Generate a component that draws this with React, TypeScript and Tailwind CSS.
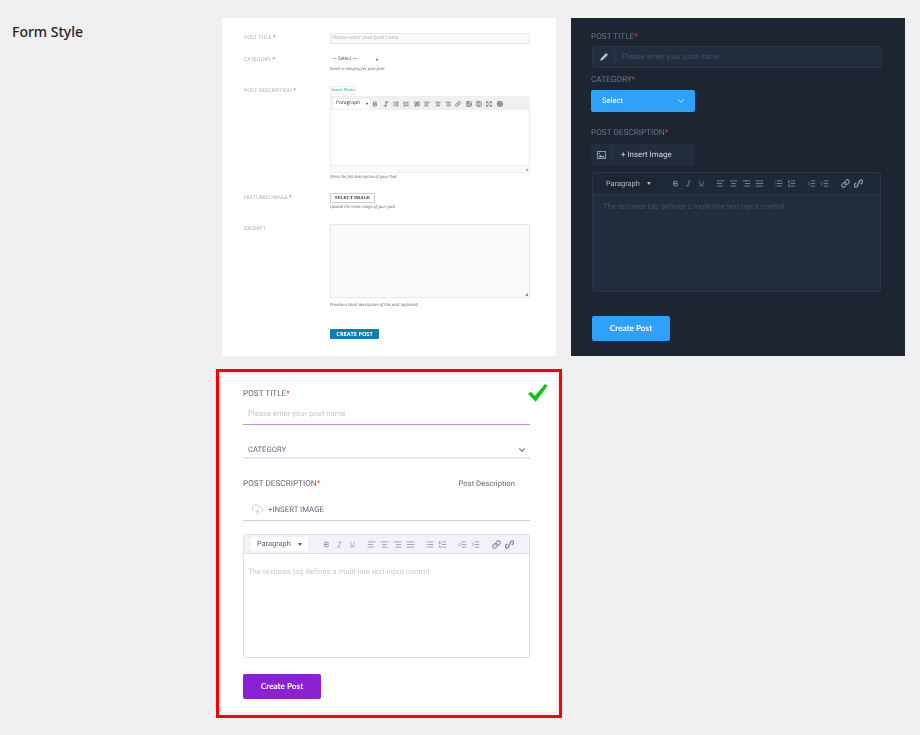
import React from 'react';
import {
  AlignCenter,
  AlignJustify,
  AlignLeft,
  AlignRight,
  Bold,
  ChevronDown,
  CloudUpload,
  Columns2,
  Expand,
  Image,
  IndentDecrease,
  IndentIncrease,
  Italic,
  Link,
  List,
  ListOrdered,
  Pencil,
  Quote,
  Table,
  Underline,
} from 'lucide-react';

const roboto = 'font-["Roboto",sans-serif]';

function Req({ className }: { className: string }) {
  return <span className={className}>*</span>;
}

function UnlinkIcon() {
  return (
    <svg width="9" height="9" viewBox="0 0 12 12" fill="none" stroke="currentColor" strokeWidth="1.8" strokeLinecap="round">
      <path d="M6.5 3.5 8 2a2.1 2.1 0 0 1 3 3L9.5 6.5" />
      <path d="M5.5 8.5 4 10a2.1 2.1 0 0 1-3-3l1.5-1.5" />
      <path d="M7.5 4.5l-3 3" />
    </svg>
  );
}

function PhotoIcon() {
  return (
    <svg width="9" height="8" viewBox="0 0 12 10">
      <rect x="0.5" y="0.5" width="11" height="9" fill="none" stroke="currentColor" />
      <path d="M2 8l2.5-3.5L6.5 7l2-1.5L10 8z" fill="currentColor" />
      <circle cx="3.2" cy="3" r="0.9" fill="currentColor" />
    </svg>
  );
}

function ToolIcon({ icon: Icon, bold, size = 9 }: { icon: React.ElementType; bold?: boolean; size?: number }) {
  return (
    <span className="flex w-[13px] justify-center">
      <Icon size={size} strokeWidth={bold ? 3 : 2} />
    </span>
  );
}

function EditorToolbar({ boxClass, iconClass }: { boxClass: string; iconClass: string }) {
  return (
    <div className="flex h-full items-center pl-[7px]">
      <div className={`flex h-[14px] w-[57px] items-center justify-between rounded-[2px] pl-[6px] pr-[6px] text-[7.4px] ${boxClass}`}>
        Paragraph
        <span className="h-0 w-0 border-x-[2.5px] border-t-[3px] border-x-transparent border-t-current" />
      </div>
      <div className={`ml-[12px] flex items-center ${iconClass}`}>
        <ToolIcon icon={Bold} bold size={7} />
        <ToolIcon icon={Italic} size={7} />
        <ToolIcon icon={Underline} size={7} />
        <div className="ml-[6px] flex">
          <ToolIcon icon={AlignLeft} />
          <ToolIcon icon={AlignCenter} />
          <ToolIcon icon={AlignRight} />
          <ToolIcon icon={AlignJustify} />
        </div>
        <div className="ml-[6px] flex">
          <ToolIcon icon={List} />
          <ToolIcon icon={ListOrdered} />
        </div>
        <div className="ml-[7px] flex">
          <ToolIcon icon={IndentDecrease} />
          <ToolIcon icon={IndentIncrease} />
        </div>
        <div className="ml-[8px] flex">
          <ToolIcon icon={Link} bold />
          <span className="flex w-[13px] justify-center">
            <UnlinkIcon />
          </span>
        </div>
      </div>
    </div>
  );
}

function LightLabel({ text, required }: { text: string; required?: boolean }) {
  return (
    <p className="text-[5.3px] leading-[9px] text-[#a8a8a8]">
      {text}
      {required && <span className="text-[#f04040]"> *</span>}
    </p>
  );
}

function Help({ children }: { children: React.ReactNode }) {
  return <p className="mt-[1px] h-[8px] text-[4.1px] italic leading-[8px] text-[#666]">{children}</p>;
}

function LightCard() {
  const tools = [Bold, Italic, List, ListOrdered, Quote, AlignLeft, AlignCenter, AlignRight, Link, Image, Columns2, Expand, Table];
  return (
    <div className={`h-[338px] bg-white pl-[22px] pt-[15px] font-["Open_Sans",sans-serif] blur-[0.3px]`}>
      <div className="grid grid-cols-[86px_200px]">
        <LightLabel text="POST TITLE" required />
        <div className="flex h-[11px] items-center rounded-[2px] border border-[#e8e8e8] bg-[#fafafa] pl-[1px] text-[5px] text-[#aaa]">
          Please enter your post name
        </div>
      </div>

      <div className="mt-[11px] grid grid-cols-[86px_200px]">
        <LightLabel text="CATEGORY" required />
        <div>
          <div className="flex h-[10px] w-[50px] items-center justify-between bg-white pl-[2px] pr-[2px] text-[4.8px] text-[#333] shadow-[0_0_1px_#ddd]">
            — Select —
            <span className="h-0 w-0 border-x-[1.5px] border-t-[2px] border-x-transparent border-t-[#333]" />
          </div>
          <Help>Select a category for your post</Help>
        </div>
      </div>

      <div className="mt-[12px] grid grid-cols-[86px_200px]">
        <LightLabel text="POST DESCRIPTION" required />
        <div>
          <div className="flex h-[9px] w-[26px] items-center justify-center whitespace-nowrap border border-[#eee] font-['Liberation_Serif',serif] text-[4.4px] font-bold text-[#69bf9c]">
            Insert Photo
          </div>
          <div className="mt-[1px] border border-[#eee]">
            <div className="flex h-[13px] items-center bg-[#f0f0f0] pl-[2px]">
              <div className="flex h-[10px] w-[37px] items-center justify-between bg-white pl-[3px] pr-[2px] text-[5px] text-[#333]">
                Paragraph
                <span className="h-0 w-0 border-x-[1.5px] border-t-[2px] border-x-transparent border-t-[#333]" />
              </div>
              <div className="flex text-[#666]">
                {tools.map((Icon, i) => (
                  <span key={i} className="flex w-[10.4px] justify-center">
                    <Icon size={6} strokeWidth={3} />
                  </span>
                ))}
              </div>
            </div>
            <div className="h-[55px] bg-white" />
            <div className="flex h-[7px] items-end justify-end border-t border-[#eee] bg-[#fafafa] pb-[1px] pr-[1px]">
              <span className="h-0 w-0 border-b-[3px] border-l-[3px] border-b-[#aaa] border-l-transparent" />
            </div>
          </div>
          <Help>Write the full description of your Post</Help>
        </div>
      </div>

      <div className="mt-[11px] grid grid-cols-[86px_200px]">
        <LightLabel text="FEATURED IMAGE" required />
        <div>
          <div className="flex h-[10px] w-[45px] items-center justify-center rounded-[1px] border border-[#ccc] font-['Liberation_Serif',serif] text-[4.6px] font-bold text-[#333]">
            SELECT IMAGE
          </div>
          <Help>Upload the main image of your post</Help>
        </div>
      </div>

      <div className="mt-[12px] grid grid-cols-[86px_200px]">
        <LightLabel text="EXCERPT" />
        <div>
          <div className="flex h-[74px] items-end justify-end border border-[#e8e8e8] bg-[#fafafa] pb-[1px] pr-[1px]">
            <span className="h-0 w-0 border-b-[3px] border-l-[3px] border-b-[#888] border-l-transparent" />
          </div>
          <p className="mt-[4px] h-[8px] text-[4.1px] italic leading-[8px] text-[#666]">Provide a short description of this post (optional)</p>
          <div className="mt-[19px] flex h-[10px] w-[49px] items-center justify-center rounded-[1px] bg-[#0d7fb8] text-[5.6px] font-bold text-white">
            CREATE POST
          </div>
        </div>
      </div>
    </div>
  );
}

function DarkCard() {
  const label = 'text-[8.2px] leading-[12px] text-[#6a7585]';
  return (
    <div className={`h-[338px] bg-[#1c2531] pl-[20px] pt-[13px] blur-[0.2px] ${roboto}`}>
      <p className={label}>
        POST TITLE<Req className="text-[#e53e3e]" />
      </p>
      <div className="ml-[1px] mt-[3px] flex h-[22px] w-[290px] items-center rounded-[2px] border border-[#2a3446] bg-[#232c3d]">
        <span className="flex h-[12px] w-[22px] items-center justify-center border-r border-[#2e394b] text-[#c3c9d1]">
          <Pencil size={8} fill="currentColor" />
        </span>
        <span className="ml-[7px] text-[7.7px] text-[#465062]">Please enter your post name</span>
      </div>
      <p className={`${label} mt-[6px]`}>
        CATEGORY<Req className="text-[#e53e3e]" />
      </p>
      <div className="mt-[4px] flex h-[22px] w-[104px] items-center justify-between rounded-[2px] bg-[#2ea1fb] pl-[11px] pr-[9px] text-[7.7px] text-white">
        Select
        <ChevronDown size={10} />
      </div>
      <p className={`${label} mt-[15px]`}>
        POST DESCRIPTION<Req className="text-[#e53e3e]" />
      </p>
      <div className="mt-[5px] flex h-[22px] w-[104px] items-center rounded-[2px] bg-[#232c3d]">
        <span className="flex h-[12px] w-[22px] items-center justify-center border-r border-[#2e394b] text-[#b5bcc6]">
          <PhotoIcon />
        </span>
        <span className="ml-[8px] text-[7.9px] text-[#d5d9df]">+ Insert Image</span>
      </div>
      <div className="ml-[1px] mt-[6px] h-[120px] w-[289px] rounded-[2px] border border-[#2a3446] bg-[#232c3d]">
        <div className="h-[22px] border-b border-[#2a3446] bg-[#1f2836]">
          <EditorToolbar boxClass="bg-[#1c2531] text-[#b4bbc5]" iconClass="text-[#8e97a5]" />
        </div>
        <p className="pl-[10px] pt-[6px] text-[7.7px] text-[#434d5e]">The textarea tag defines a multi-line text input control.</p>
      </div>
      <div className="ml-[1px] mt-[24px] flex h-[25px] w-[78px] items-center justify-center rounded-[2px] bg-[#2ea1fb] font-['Lato',sans-serif] text-[8.2px] font-bold text-white">
        Create Post
      </div>
    </div>
  );
}

function PurpleCard() {
  const label = 'text-[8.2px] leading-[12px] text-[#6d5f78]';
  return (
    <div className={`relative h-[337px] bg-white outline-[3px] outline-offset-[3px] outline-[#ff0000] ${roboto}`}>
      <svg className="absolute right-[7px] top-[8px]" width="22" height="20" viewBox="0 0 22 20">
        <polygon points="1,11 8.7,18.7 20.7,2.7 18,1 8,12.7 3.7,8.7" fill="#12c41a" />
      </svg>
      <div className="pl-[21px] pt-[13px] blur-[0.2px]">
        <p className={label}>
          POST TITLE<Req className="text-[#f0524f]" />
        </p>
        <div className="flex h-[25px] w-[287px] items-center border-b border-[#c58fee] pl-[5px] pt-[3px] text-[7.7px] text-[#c4c6d6]">
          Please enter your post name
        </div>
        <div className="mt-[17px] flex h-[17px] w-[287px] items-center justify-between border-b-2 border-[#ece4f2] pl-[5px] pr-[3px] text-[7.7px] text-[#6d5f78]">
          CATEGORY
          <ChevronDown size={10} strokeWidth={2.5} className="text-[#5a5060]" />
        </div>
        <div className="mt-[19px] flex w-[287px] items-center justify-between pr-[15px]">
          <p className={label}>
            POST DESCRIPTION<Req className="text-[#f0524f]" />
          </p>
          <span className="text-[7.7px] text-[#6d5f78]">Post Description</span>
        </div>
        <div className="mt-[9px] flex h-[22px] w-[287px] items-center border-b border-[#dcc5f0] pl-[8px] text-[7.8px] text-[#6d5f78]">
          <CloudUpload size={13} strokeWidth={1.5} className="text-[#cdb4e4]" />
          <span className="ml-[4px]">+INSERT IMAGE</span>
        </div>
        <div className="mt-[13px] h-[124px] w-[287px] rounded-[3px] border border-[#e6dcef] bg-white">
          <div className="h-[19px] rounded-t-[3px] border-b border-[#e6dcef] bg-[#f5f1f9]">
            <EditorToolbar boxClass="bg-white text-[#5e5a72]" iconClass="text-[#8c8a99]" />
          </div>
          <p className="pl-[4px] pt-[12px] text-[7.7px] text-[#c8ccd6]">The textarea tag defines a multi-line text input control.</p>
        </div>
        <div className="mt-[16px] flex h-[25px] w-[78px] items-center justify-center rounded-[2px] bg-[#8a22d4] font-['Lato',sans-serif] text-[8.2px] font-bold text-white">
          Create Post
        </div>
      </div>
    </div>
  );
}

export default function App() {
  return (
    <div className="flex min-h-screen overflow-hidden bg-[#f0f0f0] pt-[18px]">
      {/* Setting label */}
      <div className="w-[222px] pl-[12px] pt-[4px]">
        <h2 className='font-["Noto_Sans",sans-serif] text-[14px] font-medium leading-[20px] text-[#1d2327]'>Form Style</h2>
      </div>

      {/* Style options */}
      <div className="grid grid-cols-[334px_334px] content-start gap-x-[15px] gap-y-[19px] [text-rendering:geometricPrecision]">
        <LightCard />
        <DarkCard />
        <PurpleCard />
      </div>
    </div>
  );
}
